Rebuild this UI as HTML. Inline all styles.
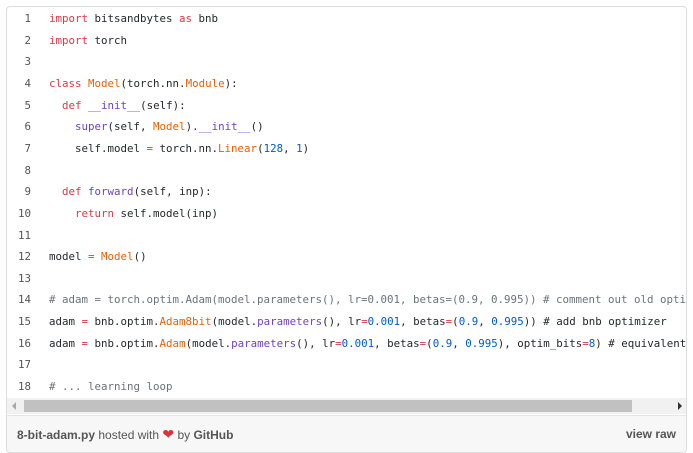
<!DOCTYPE html>
<html><head><style>
body{margin:0;background:#fff;width:693px;height:453px;overflow:hidden;font-family:"Liberation Sans",sans-serif}
.frame{position:absolute;left:6px;top:6px;width:679px;height:445px;border:1px solid #ddd;border-radius:4px;overflow:hidden;background:#fff}
.code{position:absolute;left:0;top:1px;width:679px;height:389px;overflow:hidden}
.ln{position:absolute;height:21.65px;line-height:21.65px;font-family:"DejaVu Sans Mono",monospace;font-size:10.8px;white-space:pre;color:#24292e}
.n{width:24px;text-align:right;left:0;color:#555}
.c{left:42px}
.k{color:#d73a49}.f{color:#6f42c1}.o{color:#e36209}.b{color:#005cc5}.g{color:#6a737d}
.sb{position:absolute;left:0;top:391px;width:679px;height:16px;background:#f1f1f1}
.th{position:absolute;left:17px;top:2px;width:608px;height:12px;background:#c1c1c1}
.foot{position:absolute;left:0;top:408px;width:679px;height:37px;background:#f7f7f7;border-top:1px solid #e5e5e5;font-size:12px;color:#555;line-height:37px}
</style></head><body>
<div class="frame">
<div class="code">
<div class="ln n" style="top:0">1</div><div class="ln c" style="top:0"><span class="k">import</span> bitsandbytes <span class="k">as</span> bnb</div>
<div class="ln n" style="top:21.65px">2</div><div class="ln c" style="top:21.65px"><span class="k">import</span> torch</div>
<div class="ln n" style="top:43.3px">3</div>
<div class="ln n" style="top:64.95px">4</div><div class="ln c" style="top:64.95px"><span class="k">class</span> <span class="o">Model</span>(torch.nn.<span class="o">Module</span>):</div>
<div class="ln n" style="top:86.6px">5</div><div class="ln c" style="top:86.6px">  <span class="k">def</span> <span class="f">__init__</span>(self):</div>
<div class="ln n" style="top:108.25px">6</div><div class="ln c" style="top:108.25px">    <span class="f">super</span>(self, <span class="o">Model</span>).<span class="f">__init__</span>()</div>
<div class="ln n" style="top:129.9px">7</div><div class="ln c" style="top:129.9px">    self.model <span class="k">=</span> torch.nn.<span class="o">Linear</span>(<span class="b">128</span>, <span class="b">1</span>)</div>
<div class="ln n" style="top:151.55px">8</div>
<div class="ln n" style="top:173.2px">9</div><div class="ln c" style="top:173.2px">  <span class="k">def</span> <span class="f">forward</span>(self, inp):</div>
<div class="ln n" style="top:194.85px">10</div><div class="ln c" style="top:194.85px">    <span class="k">return</span> self.model(inp)</div>
<div class="ln n" style="top:216.5px">11</div>
<div class="ln n" style="top:238.15px">12</div><div class="ln c" style="top:238.15px">model <span class="k">=</span> <span class="o">Model</span>()</div>
<div class="ln n" style="top:259.8px">13</div>
<div class="ln n" style="top:281.45px">14</div><div class="ln c g" style="top:281.45px"># adam = torch.optim.Adam(model.parameters(), lr=0.001, betas=(0.9, 0.995)) # comment out old optimizer</div>
<div class="ln n" style="top:303.1px">15</div><div class="ln c" style="top:303.1px">adam <span class="k">=</span> bnb.optim.<span class="o">Adam8bit</span>(model.<span class="f">parameters</span>(), lr<span class="k">=</span><span class="b">0.001</span>, betas<span class="k">=</span>(<span class="b">0.9</span>, <span class="b">0.995</span>)) # add bnb optimizer</div>
<div class="ln n" style="top:324.75px">16</div><div class="ln c" style="top:324.75px">adam <span class="k">=</span> bnb.optim.<span class="o">Adam</span>(model.<span class="f">parameters</span>(), lr<span class="k">=</span><span class="b">0.001</span>, betas<span class="k">=</span>(<span class="b">0.9</span>, <span class="b">0.995</span>), optim_bits<span class="k">=</span><span class="b">8</span>) # equivalent</div>
<div class="ln n" style="top:346.4px">17</div>
<div class="ln n" style="top:368.05px">18</div><div class="ln c g" style="top:368.05px"># ... learning loop</div>
</div>
<div class="sb"><div class="th"></div>
<svg style="position:absolute;left:4px;top:4px" width="6" height="8"><path d="M5 0L1 4L5 8Z" fill="#aaa"/></svg>
<svg style="position:absolute;left:670px;top:4px" width="6" height="8"><path d="M1 0L5 4L1 8Z" fill="#333"/></svg>
</div>
<div class="foot"><span style="position:absolute;left:10px"><b style="font-weight:600;color:#555">8-bit-adam.py</b> hosted with <span style="color:#e0303a;font-size:14px">&#10084;</span> by <b style="font-weight:600;color:#555">GitHub</b></span><span style="position:absolute;right:10px;font-weight:600;color:#555">view raw</span></div>
</div>
</body></html>
